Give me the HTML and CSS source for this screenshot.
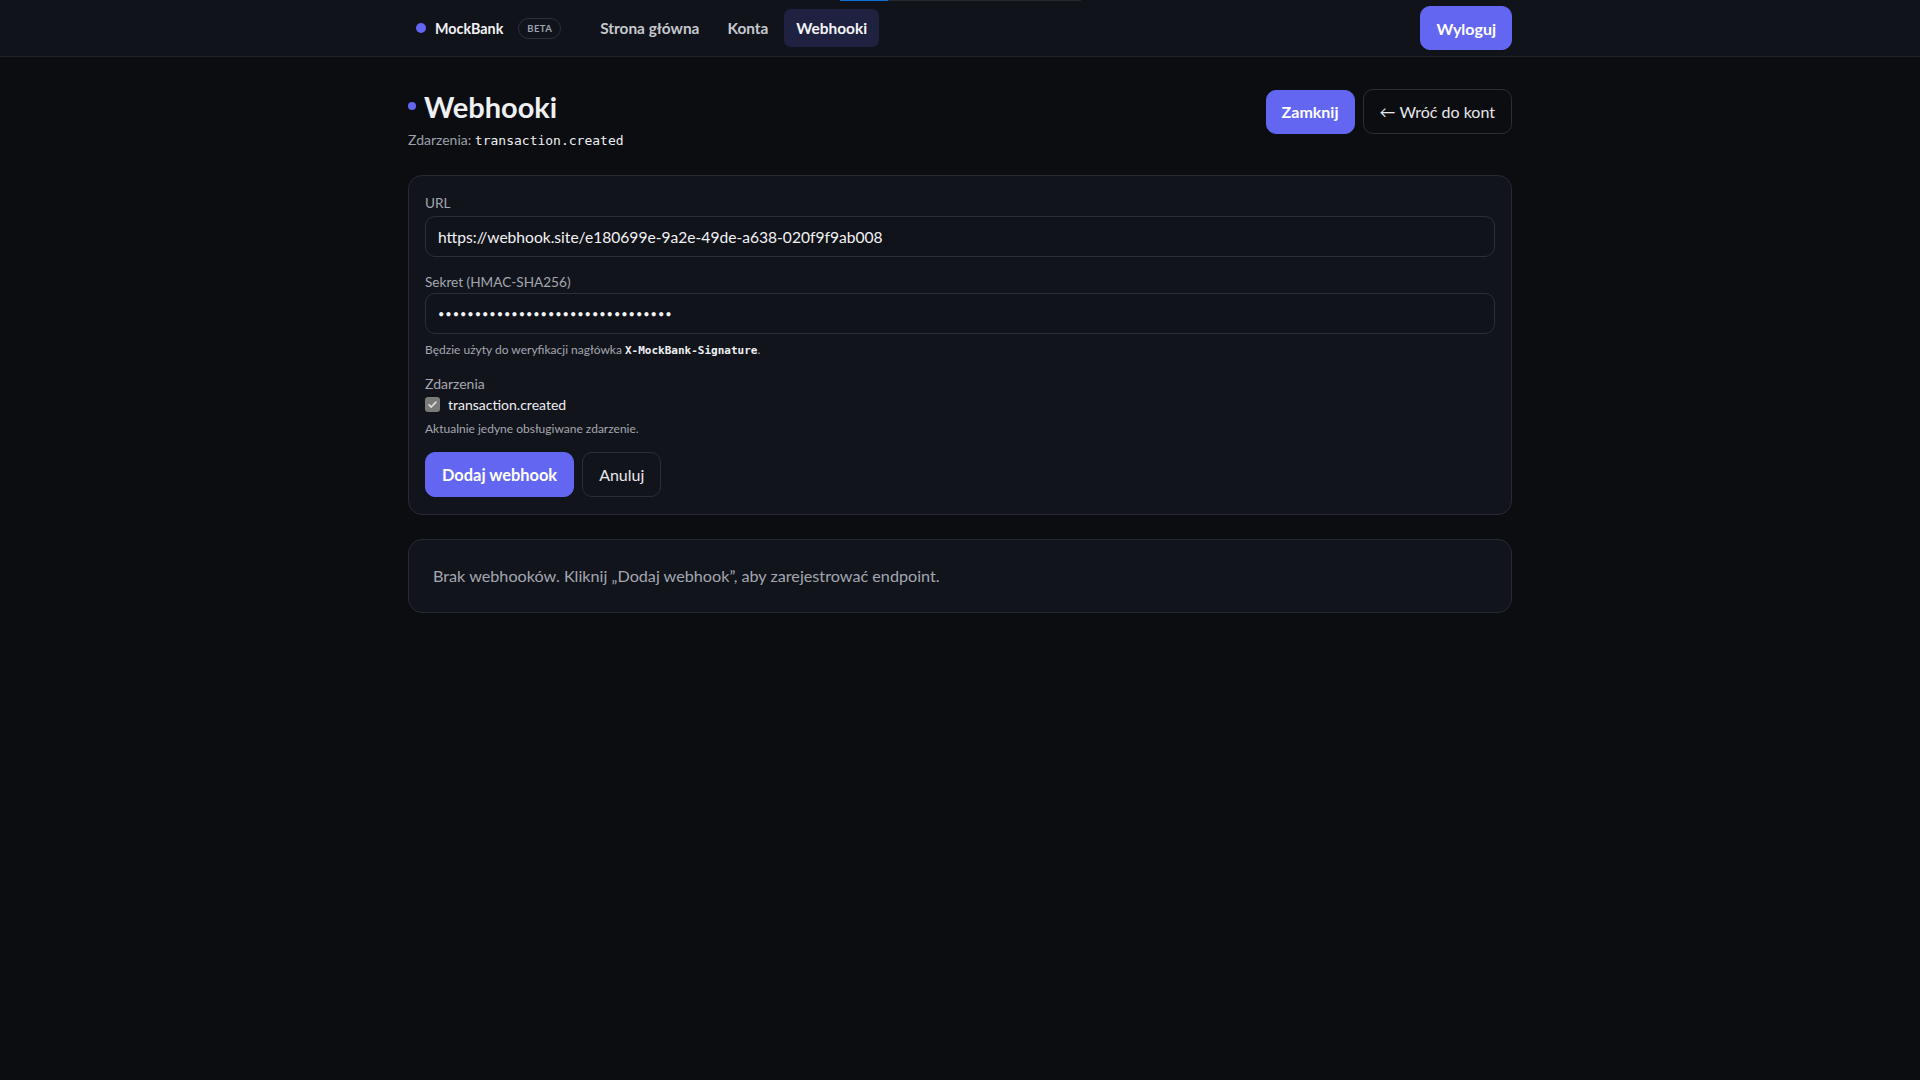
FILE: index.html
```html
<!DOCTYPE html>
<html lang="pl">
<head>
<meta charset="utf-8">
<title>Webhooki — MockBank</title>
<link rel="stylesheet" href="styles.css">
</head>
<body>
<div class="loadbar"><span class="loadbar-fill"></span></div>
<header class="topnav">
  <div class="topnav-inner">
    <div class="brand">
      <span class="brand-dot"></span>
      <span class="brand-name">MockBank</span>
      <span class="badge">BETA</span>
    </div>
    <nav class="navlinks">
      <a class="navlink">Strona główna</a>
      <a class="navlink">Konta</a>
      <a class="navlink active">Webhooki</a>
    </nav>
    <button class="btn btn-primary btn-logout">Wyloguj</button>
  </div>
</header>

<main class="page">
  <div class="page-head">
    <div class="head-text">
      <h1 class="title"><span class="title-dot"></span>Webhooki</h1>
      <p class="subtitle">Zdarzenia: <code class="code">transaction.created</code></p>
    </div>
    <div class="head-actions">
      <button class="btn btn-primary">Zamknij</button>
      <button class="btn btn-outline">← Wróć do kont</button>
    </div>
  </div>

  <section class="card form-card">
    <div class="field">
      <label class="label">URL</label>
      <div class="input">https://webhook.site/e180699e-9a2e-49de-a638-020f9f9ab008</div>
    </div>
    <div class="field">
      <label class="label">Sekret (HMAC-SHA256)</label>
      <div class="input input-secret">••••••••••••••••••••••••••••••••</div>
      <p class="hint">Będzie użyty do weryfikacji nagłówka <code class="code code-strong">X-MockBank-Signature</code>.</p>
    </div>
    <div class="field field-events">
      <span class="label">Zdarzenia</span>
      <div class="check-row">
        <span class="checkbox"><svg viewBox="0 0 16 16" width="11" height="11"><path d="M3 8.5l3.2 3.2L13 4.5" fill="none" stroke="#dcdcdc" stroke-width="2.4" stroke-linecap="round" stroke-linejoin="round"/></svg></span>
        <span class="check-label">transaction.created</span>
      </div>
      <p class="hint hint-events">Aktualnie jedyne obsługiwane zdarzenie.</p>
    </div>
    <div class="form-actions">
      <button class="btn btn-primary btn-lg">Dodaj webhook</button>
      <button class="btn btn-outline btn-lg">Anuluj</button>
    </div>
  </section>

  <section class="card empty-card">
    <p class="empty-text">Brak webhooków. Kliknij „Dodaj webhook”, aby zarejestrować endpoint.</p>
  </section>
</main>
</body>
</html>
```

FILE: styles.css
```css
* { box-sizing: border-box; }

html, body {
  margin: 0;
  padding: 0;
  background: #0c0d11;
  color: #e6e7eb;
  font-family: "Lato", "Noto Sans", "Liberation Sans", sans-serif;
  font-size: 15px;
}

.loadbar {
  position: absolute;
  top: 0;
  left: 840px;
  width: 241px;
  height: 1px;
  background: #26282d;
  z-index: 10;
}
.loadbar-fill {
  display: block;
  width: 48px;
  height: 1px;
  background: #0b72d6;
}

.topnav {
  background: #11131a;
  border-bottom: 1px solid #1f222a;
  height: 57px;
}
.topnav-inner {
  max-width: 1104px;
  margin: 0 auto;
  height: 56px;
  display: flex;
  align-items: center;
}

.brand {
  display: flex;
  align-items: center;
  padding-left: 8px;
}
.brand-dot {
  width: 10px;
  height: 10px;
  border-radius: 50%;
  background: #6366f1;
  margin-right: 9px;
}
.brand-name {
  font-weight: 700;
  font-size: 14.3px;
  color: #f1f2f4;
}
.badge {
  margin-left: 15px;
  height: 21px;
  padding: 0 8px;
  border: 1px solid #2e313a;
  border-radius: 999px;
  font-size: 9.5px;
  font-weight: 700;
  letter-spacing: 0.4px;
  color: #9ea2ad;
  display: inline-flex;
  align-items: center;
}

.navlinks {
  display: flex;
  gap: 4px;
  margin-left: 27px;
}
.navlink {
  display: inline-flex;
  align-items: center;
  height: 38px;
  padding: 0 12px;
  border-radius: 7px;
  font-weight: 700;
  font-size: 15.4px;
  color: #c6c8cf;
  cursor: pointer;
}
.navlink.active {
  background: #1f2140;
  color: #f4f4f7;
}

.btn {
  font-family: inherit;
  font-size: 16px;
  border-radius: 10px;
  cursor: pointer;
  display: inline-flex;
  align-items: center;
  justify-content: center;
}
.btn-primary {
  background: #6366f1;
  border: 1px solid #6366f1;
  color: #ffffff;
  font-weight: 700;
  height: 44px;
  padding: 0 15px;
}
.btn-outline {
  background: transparent;
  border: 1px solid #2b2e37;
  color: #e6e7eb;
  font-weight: 400;
  height: 45px;
  padding: 0 16px;
}
.btn-logout {
  margin-left: auto;
}

.page {
  max-width: 1104px;
  margin: 0 auto;
  padding-top: 32px;
}

.page-head {
  display: flex;
  justify-content: space-between;
  align-items: flex-start;
}
.title {
  margin: 0;
  font-size: 29px;
  line-height: 36px;
  font-weight: 700;
  color: #eef0f3;
  display: flex;
  align-items: center;
}
.title-dot {
  width: 8px;
  height: 8px;
  border-radius: 50%;
  background: #6366f1;
  margin-right: 8px;
  margin-top: -3px;
}
.subtitle {
  margin: 5px 0 0;
  font-size: 14px;
  line-height: 20px;
  color: #9ca1ab;
}
.code {
  font-family: "DejaVu Sans Mono", "Liberation Mono", monospace;
  font-size: 13px;
  color: #eef0f3;
}
.code-strong {
  font-size: 11px;
  font-weight: 700;
}
.head-actions {
  display: flex;
  gap: 8px;
  align-items: center;
}

.card {
  background: #12141b;
  border: 1px solid #262a33;
  border-radius: 14px;
}
.form-card {
  margin-top: 24px;
  padding: 17px 16px 17px;
}
.field + .field {
  margin-top: 15px;
}
.label {
  display: block;
  font-size: 13.6px;
  line-height: 20px;
  color: #a3a7b1;
  margin-bottom: 3px;
}
.field + .field .label {
  margin-bottom: 1px;
}
.input {
  height: 41px;
  border: 1px solid #2b2f39;
  border-radius: 10px;
  background: #11131a;
  padding: 0 12px;
  display: flex;
  align-items: center;
  font-size: 15.6px;
  color: #f1f2f4;
}
.input-secret {
  font-size: 11px;
  letter-spacing: 0.95px;
}
.hint {
  margin: 8px 0 0;
  font-size: 12px;
  line-height: 16px;
  color: #a3a7b1;
}
.field.field-events {
  margin-top: 15px;
}
.field.field-events .label {
  margin-bottom: 0;
  font-size: 14px;
}
.check-row {
  display: flex;
  align-items: center;
  height: 20px;
}
.checkbox {
  width: 15px;
  height: 15px;
  border-radius: 3px;
  background: #7a7a7a;
  display: inline-flex;
  align-items: center;
  justify-content: center;
  margin-right: 8px;
}
.check-label {
  font-size: 14px;
  color: #eceef1;
}
.hint-events {
  margin-top: 7px;
}
.form-actions {
  display: flex;
  gap: 8px;
  margin-top: 15px;
}
.btn-lg {
  height: 45px;
}
.btn-primary.btn-lg {
  padding: 0 16px;
  font-size: 16.4px;
}

.empty-card {
  margin-top: 24px;
  padding: 24px;
}
.empty-text {
  margin: 0;
  font-size: 16.2px;
  line-height: 24px;
  color: #a3a7b1;
}
```
